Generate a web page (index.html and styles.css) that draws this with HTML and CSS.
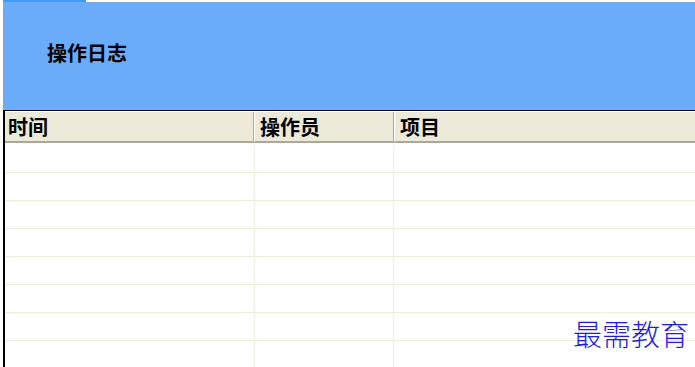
FILE: index.html
```html
<!DOCTYPE html>
<html lang="zh-CN">
<head>
    <meta charset="UTF-8">
    <title>操作日志</title>
    <link rel="stylesheet" href="styles.css">
</head>
<body>
<div class="page">
    <div class="topbar"><span class="tab"></span></div>
    <div class="banner">
        <h1 class="title">操作日志</h1>
    </div>
    <div class="log-table">
        <div class="log-head">
            <div class="cell col-time">时间</div>
            <div class="cell col-user">操作员</div>
            <div class="cell col-item">项目</div>
        </div>
        <div class="log-body">
            <div class="row"><div class="cell"></div><div class="cell"></div><div class="cell"></div></div>
            <div class="row"><div class="cell"></div><div class="cell"></div><div class="cell"></div></div>
            <div class="row"><div class="cell"></div><div class="cell"></div><div class="cell"></div></div>
            <div class="row"><div class="cell"></div><div class="cell"></div><div class="cell"></div></div>
            <div class="row"><div class="cell"></div><div class="cell"></div><div class="cell"></div></div>
            <div class="row"><div class="cell"></div><div class="cell"></div><div class="cell"></div></div>
            <div class="row"><div class="cell"></div><div class="cell"></div><div class="cell"></div></div>
            <div class="row"><div class="cell"></div><div class="cell"></div><div class="cell"></div></div>
        </div>
        <div class="watermark">最需教育</div>
    </div>
</div>
</body>
</html>
```

FILE: styles.css
```css
/* XP 风格配色 */
:root {
    --banner-blue: #6aacf8;
    --tab-blue: #3d9cf6;
    --head-beige: #ece9d8;
    --head-shadow: #aca899;
    --grid-line: #efedde;
}

body {
    margin: 0;
    padding: 0;
    background: #ffffff;
    font-family: "Noto Sans CJK SC", "Noto Sans", sans-serif;
}

.page {
    width: 695px;
    height: 367px;
    overflow: hidden;
}

.topbar {
    height: 2px;
    padding-left: 3px;
}

.tab {
    display: block;
    width: 83px;
    height: 2px;
    background: var(--tab-blue);
}

.banner {
    height: 108px;
    margin-left: 3px;
    background: var(--banner-blue);
    display: flex;
    align-items: center;
}

.title {
    margin: 0 0 8px 44px;
    font-size: 20px;
    font-weight: bold;
    color: #000;
}

.log-table {
    position: relative;
    margin-left: 3px;
    height: 257px;
    border-left: 2px solid #000;
    border-top: 1px solid #000;
}

.log-head {
    display: grid;
    grid-template-columns: 249px 140px 1fr;
    height: 29px;
    border-top: 1px solid #fff;
    border-bottom: 2px solid var(--head-shadow);
    background: var(--head-beige);
}

.log-head .cell {
    border-right: 1px solid var(--head-shadow);
    box-shadow: inset 1px 0 0 #fff;
    font-size: 20px;
    font-weight: bold;
    line-height: 30px;
    padding-left: 6px;
    color: #000;
}

.log-head .col-time {
    padding-left: 3px;
    box-shadow: none;
}

.log-head .col-item {
    border-right: none;
}

.log-body {
    padding-top: 2px;
}

.row {
    display: grid;
    grid-template-columns: 249px 140px 1fr;
    height: 27px;
    border-bottom: 1px solid var(--grid-line);
}

.row .cell:nth-child(2) {
    border-left: 1px solid var(--grid-line);
    border-right: 1px solid var(--grid-line);
}

.watermark {
    position: absolute;
    right: 6px;
    bottom: 14px;
    font-size: 29px;
    font-weight: 300;
    color: #1c1cf0;
}
```
